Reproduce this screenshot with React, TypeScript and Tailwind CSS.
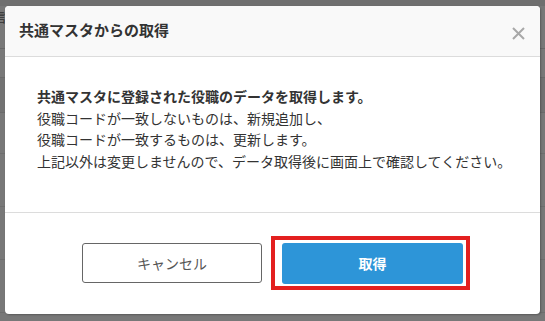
import React from "react";

const font = { fontFamily: '"Noto Sans CJK JP", "Noto Sans", sans-serif' };

function BackgroundPage() {
  // dimmed page behind the modal: only thin slivers are visible
  return (
    <div className="flex flex-col">
      <div className="h-[6px] bg-[#6f6f6f]" />
      <div className="h-[43px] border-b border-[#686868] text-[13px] leading-[22px] text-[#333]">
        <span className="-ml-[6px]">言</span>
      </div>
      <div className="h-[29px] border-b border-[#6a6a6a]" />
      <div className="h-[35px] border-b border-[#6a6a6a] bg-[#727272]" />
      <div className="h-[41px] border-b border-[#6e6e6e]" />
      <div className="h-[53px] border-b border-[#6e6e6e]" />
      <div className="h-[53px] border-b border-[#6e6e6e]" />
      <div className="h-[53px] border-b border-[#6e6e6e]" />
    </div>
  );
}

function Modal() {
  return (
    <div className="overflow-hidden rounded-[4px] bg-white shadow-[1px_1px_2px_rgba(0,0,0,0.25)]">
      <div className="flex h-[51px] items-center justify-between border-b border-[#dcdcdc] bg-[#f9f9f9] pl-[14px] pr-[15px]">
        <h2 className="-mt-[2px] text-[15px] font-bold text-[#333]">共通マスタからの取得</h2>
        <button className="mt-[4px] text-[#a8a8a8]">
          <svg width="13" height="13" viewBox="0 0 13 13" fill="none" stroke="currentColor" strokeWidth="2">
            <path d="M1 1l11 11M12 1L1 12" />
          </svg>
        </button>
      </div>
      <div className="pb-[40px] pl-[32px] pr-[20px] pt-[29px] text-[14px] leading-[21.5px] text-[#333]">
        <p className="font-bold">共通マスタに登録された役職のデータを取得します。</p>
        <p>役職コードが一致しないものは、新規追加し、</p>
        <p>役職コードが一致するものは、更新します。</p>
        <p>上記以外は変更しませんので、データ取得後に画面上で確認してください。</p>
      </div>
      <div className="flex justify-center gap-[20px] border-t border-[#dcdcdc] pb-[30px] pt-[30px]">
        <button className="h-[40px] w-[180px] rounded-[3px] border border-[#666] bg-white text-[14px] text-[#555]">
          キャンセル
        </button>
        <span className="relative">
          <button className="h-[41px] w-[181px] rounded-[3px] bg-[#2d95d8] text-[14px] font-bold text-white">
            取得
          </button>
          <span className="pointer-events-none absolute -bottom-[6px] -left-[11px] -right-[7px] -top-[7px] border-4 border-[#e3201f]" />
        </span>
      </div>
    </div>
  );
}

export default function App() {
  return (
    <div className="relative h-[321px] w-[545px] overflow-hidden bg-[#787878]" style={font}>
      <BackgroundPage />
      <div className="absolute left-[5px] top-[6px] w-[535px]">
        <Modal />
      </div>
    </div>
  );
}
